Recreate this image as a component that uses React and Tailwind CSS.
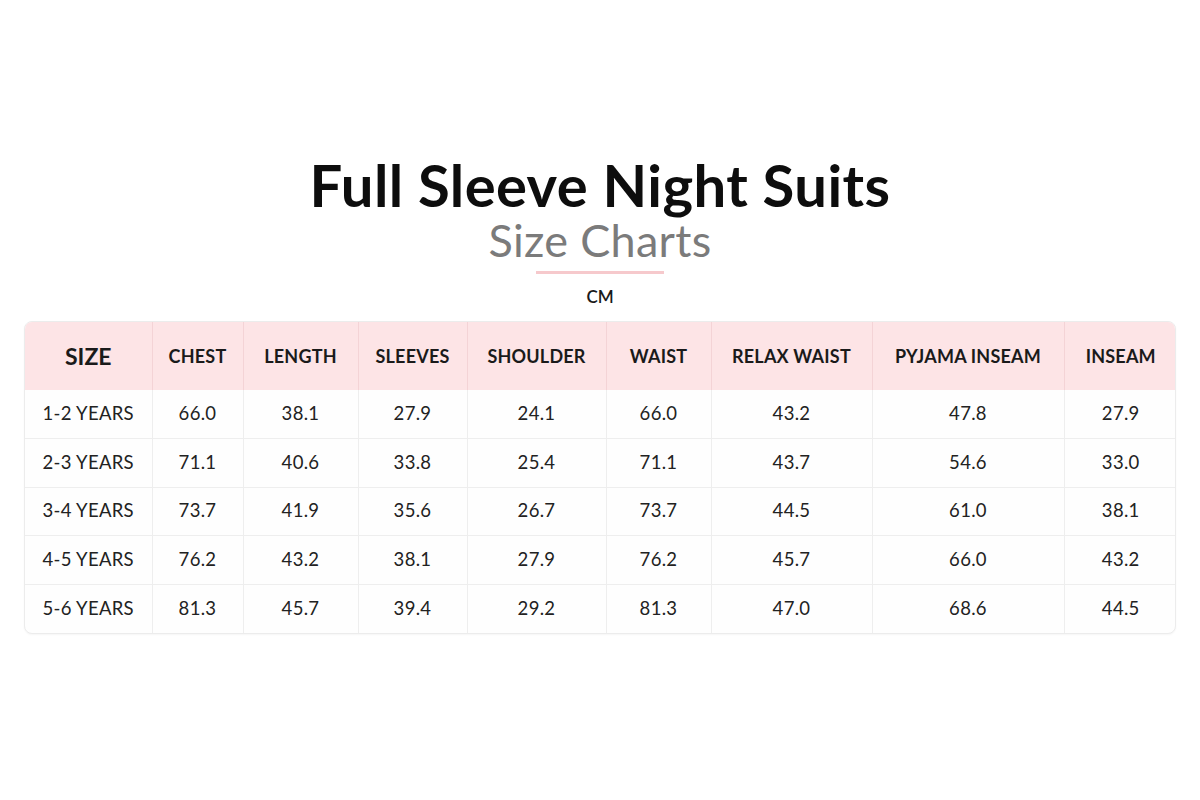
const headers = [
  { label: 'SIZE', w: 'w-[127px]', big: true },
  { label: 'CHEST', w: 'w-[91px]' },
  { label: 'LENGTH', w: 'w-[115px]' },
  { label: 'SLEEVES', w: 'w-[109px]' },
  { label: 'SHOULDER', w: 'w-[139px]' },
  { label: 'WAIST', w: 'w-[105px]' },
  { label: 'RELAX WAIST', w: 'w-[161px]' },
  { label: 'PYJAMA INSEAM', w: 'w-[192px]' },
  { label: 'INSEAM', w: 'w-[113px]' },
];

const rows = [
  ['1-2 YEARS', '66.0', '38.1', '27.9', '24.1', '66.0', '43.2', '47.8', '27.9'],
  ['2-3 YEARS', '71.1', '40.6', '33.8', '25.4', '71.1', '43.7', '54.6', '33.0'],
  ['3-4 YEARS', '73.7', '41.9', '35.6', '26.7', '73.7', '44.5', '61.0', '38.1'],
  ['4-5 YEARS', '76.2', '43.2', '38.1', '27.9', '76.2', '45.7', '66.0', '43.2'],
  ['5-6 YEARS', '81.3', '45.7', '39.4', '29.2', '81.3', '47.0', '68.6', '44.5'],
];

export default function App() {
  return (
    <div className="w-[1200px] h-[800px] bg-white font-['Lato','Liberation_Sans',sans-serif] text-[#1a1a1a] flex flex-col items-center pt-[155px]">
      {/* Heading */}
      <h1 className="text-[58px] leading-[60px] font-bold tracking-[0.4px] text-[#0d0d0d]">
        Full Sleeve Night Suits
      </h1>
      <h2 className="text-[45px] leading-[50px] text-[#7b7b7b] tracking-[0.3px]">Size Charts</h2>
      <div className="w-[128px] h-[3px] bg-[#f6c9cc] mt-[6px]"></div>
      <div className="text-[17px] font-semibold mt-[12px] leading-[22px]">CM</div>

      {/* Table */}
      <div className="mt-[13px] w-[1152px] rounded-[8px] border border-[#ececec] overflow-hidden bg-[#fefefe] shadow-[0_1px_2px_rgba(0,0,0,0.04)]">
        <table className="w-full border-collapse table-fixed">
          <thead>
            <tr className="bg-[#fde4e6] h-[68px]">
              {headers.map((h, i) => (
                <th
                  key={h.label}
                  className={`${h.w} font-bold text-center ${h.big ? 'text-[23px]' : 'text-[18px] tracking-[0.2px]'} ${i > 0 ? 'border-l border-[#f4d3d6]' : ''}`}
                >
                  {h.label}
                </th>
              ))}
            </tr>
          </thead>
          <tbody>
            {rows.map((r, ri) => (
              <tr key={ri} className={`h-[48.5px] ${ri > 0 ? 'border-t border-[#eeeeee]' : ''}`}>
                {r.map((c, ci) => (
                  <td
                    key={ci}
                    className={`text-center text-[18.5px] tracking-[0.3px] text-[#222] ${ci > 0 ? 'border-l border-[#eeeeee]' : ''}`}
                  >
                    {c}
                  </td>
                ))}
              </tr>
            ))}
          </tbody>
        </table>
      </div>
    </div>
  );
}
